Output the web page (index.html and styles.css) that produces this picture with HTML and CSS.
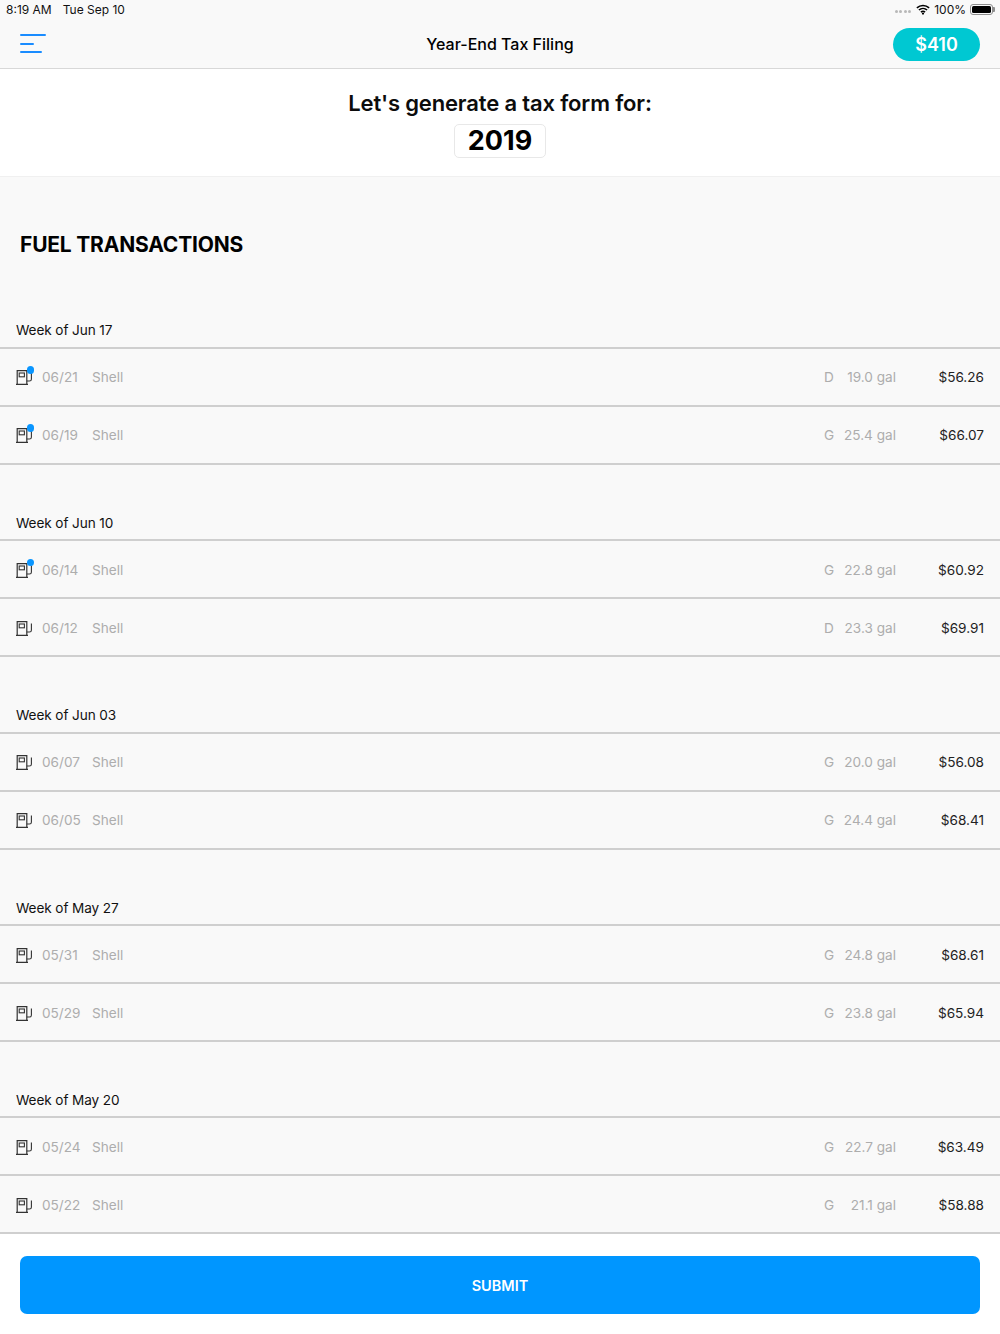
FILE: index.html
```html
<!DOCTYPE html>
<html lang="en">
<head>
<meta charset="utf-8">
<title>Year-End Tax Filing</title>
<link rel="stylesheet" href="styles.css">
</head>
<body>
<svg class="defs" width="0" height="0" aria-hidden="true">
  <symbol id="pump" viewBox="0 0 16 16">
    <path d="M1.2 15V1.6H10.8V15M0 15.4H12" fill="none" stroke="#333" stroke-width="1.2"/>
    <rect x="3.2" y="4" width="5.2" height="3.8" fill="none" stroke="#333" stroke-width="1.1"/>
    <path d="M10.8 12H13.4C14.8 12 15.4 11.3 15.4 10.2V3.4" fill="none" stroke="#333" stroke-width="1.1"/>
  </symbol>
</svg>
<div class="app">
  <header class="topbar">
    <div class="status">
      <div class="status-left"><span>8:19 AM</span><span>Tue Sep 10</span></div>
      <div class="status-right">
        <span class="dots"><i></i><i></i><i></i><i></i></span>
        <svg class="wifi" width="14" height="11" viewBox="0 0 16 12"><path d="M1 4.2C5 .6 11 .6 15 4.2M3.3 6.6C6 4.3 10 4.3 12.7 6.6M5.6 8.9C7 7.8 9 7.8 10.4 8.9" fill="none" stroke="#000" stroke-width="1.8"/><circle cx="8" cy="10.6" r="1.3" fill="#000"/></svg>
        <span>100%</span>
        <span class="battery"><span class="battery-fill"></span></span>
      </div>
    </div>
    <div class="navbar">
      <button class="menu" aria-label="Menu"><i class="l1"></i><i class="l2"></i><i class="l3"></i></button>
      <h1>Year-End Tax Filing</h1>
      <div class="pill">$410</div>
    </div>
  </header>
  <section class="intro">
    <h2>Let's generate a tax form for:</h2>
    <div class="year">2019</div>
  </section>
  <main class="list">
    <h3>FUEL TRANSACTIONS</h3>

    <section class="week">
      <div class="week-title">Week of Jun 17</div>
      <div class="row"><span class="ico dot"><svg><use href="#pump"/></svg></span><span class="date">06/21</span><span class="st">Shell</span><span class="grade">D</span><span class="gal">19.0 gal</span><span class="amt">$56.26</span></div>
      <div class="row"><span class="ico dot"><svg><use href="#pump"/></svg></span><span class="date">06/19</span><span class="st">Shell</span><span class="grade">G</span><span class="gal">25.4 gal</span><span class="amt">$66.07</span></div>
    </section>
    <section class="week">
      <div class="week-title">Week of Jun 10</div>
      <div class="row"><span class="ico dot"><svg><use href="#pump"/></svg></span><span class="date">06/14</span><span class="st">Shell</span><span class="grade">G</span><span class="gal">22.8 gal</span><span class="amt">$60.92</span></div>
      <div class="row"><span class="ico"><svg><use href="#pump"/></svg></span><span class="date">06/12</span><span class="st">Shell</span><span class="grade">D</span><span class="gal">23.3 gal</span><span class="amt">$69.91</span></div>
    </section>
    <section class="week">
      <div class="week-title">Week of Jun 03</div>
      <div class="row"><span class="ico"><svg><use href="#pump"/></svg></span><span class="date">06/07</span><span class="st">Shell</span><span class="grade">G</span><span class="gal">20.0 gal</span><span class="amt">$56.08</span></div>
      <div class="row"><span class="ico"><svg><use href="#pump"/></svg></span><span class="date">06/05</span><span class="st">Shell</span><span class="grade">G</span><span class="gal">24.4 gal</span><span class="amt">$68.41</span></div>
    </section>
    <section class="week">
      <div class="week-title">Week of May 27</div>
      <div class="row"><span class="ico"><svg><use href="#pump"/></svg></span><span class="date">05/31</span><span class="st">Shell</span><span class="grade">G</span><span class="gal">24.8 gal</span><span class="amt">$68.61</span></div>
      <div class="row"><span class="ico"><svg><use href="#pump"/></svg></span><span class="date">05/29</span><span class="st">Shell</span><span class="grade">G</span><span class="gal">23.8 gal</span><span class="amt">$65.94</span></div>
    </section>
    <section class="week">
      <div class="week-title">Week of May 20</div>
      <div class="row"><span class="ico"><svg><use href="#pump"/></svg></span><span class="date">05/24</span><span class="st">Shell</span><span class="grade">G</span><span class="gal">22.7 gal</span><span class="amt">$63.49</span></div>
      <div class="row"><span class="ico"><svg><use href="#pump"/></svg></span><span class="date">05/22</span><span class="st">Shell</span><span class="grade">G</span><span class="gal">21.1 gal</span><span class="amt">$58.88</span></div>
    </section>
  </main>
  <footer class="foot"><button class="submit">SUBMIT</button></footer>
</div>
</body>
</html>
```
FILE: styles.css
```css
* { box-sizing: border-box; }
html, body { margin: 0; padding: 0; }
body { font-family: Inter, "Liberation Sans", sans-serif; color: #000; background: #fff; }
.defs { position: absolute; }
.app { width: 1000px; height: 1334px; display: flex; flex-direction: column; overflow: hidden; }

.topbar { height: 69px; flex: none; background: #f9f9f9; border-bottom: 1px solid #d8d8d8; }
.status { height: 19px; margin-bottom: 1px; display: flex; justify-content: space-between; align-items: center; padding: 0 7px 0 6px; font-size: 12px; color: #111; }
.status-left { display: flex; gap: 11px; }
.status-right { display: flex; align-items: center; gap: 4px; }
.dots { display: flex; gap: 1.5px; margin-top: 4px; margin-right: 1px; }
.dots i { width: 3px; height: 3px; border-radius: 50%; background: #b8b8b8; }
.battery { width: 23px; height: 11px; border: 1px solid #8e8e8e; border-radius: 3px; padding: 1px; position: relative; }
.battery::after { content: ""; position: absolute; right: -3px; top: 2px; width: 2px; height: 5px; background: #8e8e8e; border-radius: 0 1px 1px 0; }
.battery-fill { display: block; height: 100%; background: #000; border-radius: 1.5px; }

.navbar { height: 48px; display: flex; align-items: center; justify-content: space-between; padding: 0 20px; position: relative; }
.navbar h1 { position: absolute; left: 0; right: 0; margin: 0; text-align: center; font-size: 16px; font-weight: 500; }
.menu { width: 26px; height: 20px; padding: 0; border: 0; background: none; display: flex; flex-direction: column; gap: 6.5px; }
.menu i { display: block; height: 2px; background: #1a8cff; border-radius: 1px; }
.l1 { width: 26px; } .l2 { width: 14px; } .l3 { width: 22px; }
.pill { width: 87px; height: 33px; border-radius: 17px; background: #00c8d2; color: #fff; font-size: 18px; font-weight: 600; display: flex; align-items: center; justify-content: center; position: relative; }

.intro { height: 108px; flex: none; background: #fff; border-bottom: 1px solid #f0f0f0; display: flex; flex-direction: column; align-items: center; padding-top: 20px; }
.intro h2 { margin: 0; font-size: 22px; line-height: 28px; font-weight: 600; letter-spacing: -0.15px; color: #0c0c0c; }
.year { margin-top: 7px; width: 92px; height: 34px; border: 1px solid #e8e8e8; border-radius: 5px; padding-bottom: 2px; font-size: 27px; font-weight: 700; display: flex; align-items: center; justify-content: center; }

.list { flex: 1; min-height: 0; background: #f9f9f9; padding-top: 53px; }
.list h3 { margin: 0 0 12.65px 20px; height: 30px; line-height: 30px; font-size: 21px; font-weight: 700; letter-spacing: -0.2px; }
.week { height: 192.35px; }
.week-title { height: 76.35px; padding: 47.85px 16px 0; font-size: 13.6px; line-height: 20px; letter-spacing: -0.1px; color: #111; border-bottom: 2px solid #cfcfcf; }
.row { height: 58px; display: flex; align-items: center; padding: 1px 16px 0; font-size: 13.6px; color: #adadad; border-bottom: 2px solid #cfcfcf; }
.ico { width: 16px; height: 16px; position: relative; flex: none; margin-right: 10px; }
.ico svg { display: block; width: 16px; height: 16px; }
.dot::after { content: ""; position: absolute; top: -3px; right: -2px; width: 7.5px; height: 7.5px; border-radius: 50%; background: #0a96ff; }
.date { width: 50px; }
.st { flex: 1; }
.grade { width: 10px; text-align: center; }
.gal { width: 62px; text-align: right; }
.amt { width: 88px; text-align: right; color: #222; }

.foot { height: 100px; flex: none; background: #fff; padding: 22px 20px 0; }
.submit { display: block; width: 100%; height: 58px; border: 0; border-radius: 7px; background: #0096ff; color: #fff; font: 600 14.5px Inter, "Liberation Sans", sans-serif; }
```
